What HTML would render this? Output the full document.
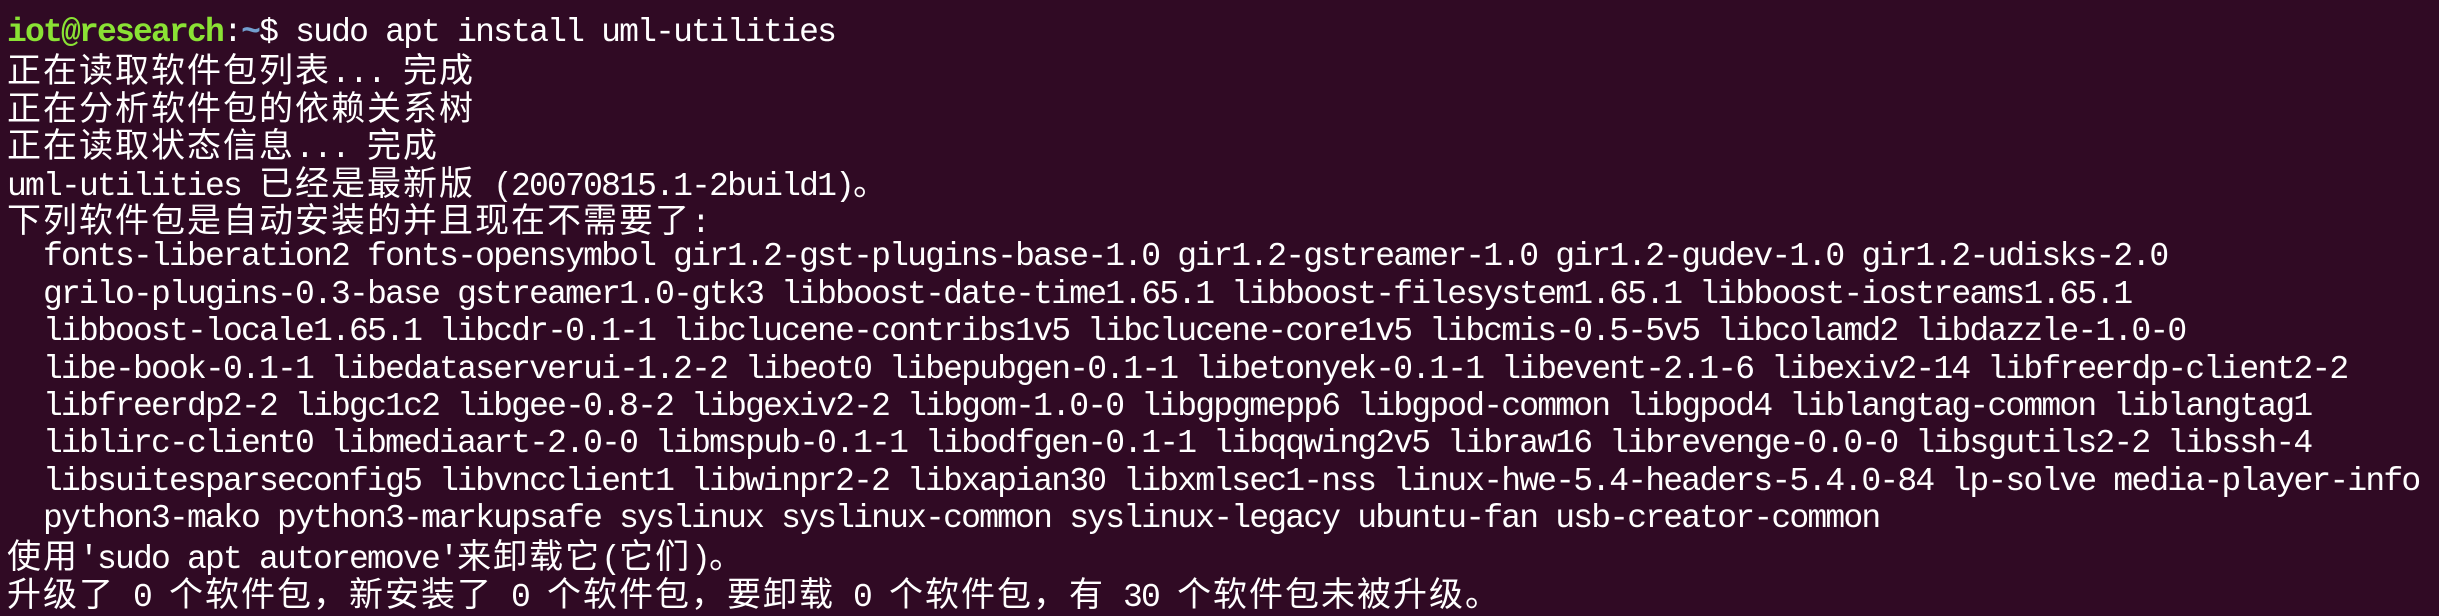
<!DOCTYPE html>
<html><head><meta charset="utf-8"><style>
html,body{margin:0;padding:0;background:#300a24;width:2439px;height:615px;overflow:hidden}
.t{position:absolute;left:7px;top:14px;font-family:"Liberation Mono","Noto Sans CJK SC",monospace;font-size:33px;letter-spacing:-1.8px;line-height:37.4px;color:#ffffff;white-space:pre}
.t div{height:37.4px;line-height:37.4px;overflow:visible}
.c{font-family:"Noto Sans CJK SC","WenQuanYi Zen Hei",sans-serif;font-size:34px;letter-spacing:2px;line-height:1;vertical-align:baseline}
.g{color:#8ae234;font-weight:bold}
.b{color:#729fcf;font-weight:bold}
</style></head><body><div class="t"><div><span class="g">iot@research</span>:<span class="b">~</span>$ sudo apt install uml-utilities</div><div><span class="c">正在读取软件包列表</span>... <span class="c">完成</span></div><div><span class="c">正在分析软件包的依赖关系树</span></div><div><span class="c">正在读取状态信息</span>... <span class="c">完成</span></div><div>uml-utilities <span class="c">已经是最新版</span> (20070815.1-2build1)<span class="c">。</span></div><div><span class="c">下列软件包是自动安装的并且现在不需要了</span>:</div><div>  fonts-liberation2 fonts-opensymbol gir1.2-gst-plugins-base-1.0 gir1.2-gstreamer-1.0 gir1.2-gudev-1.0 gir1.2-udisks-2.0</div><div>  grilo-plugins-0.3-base gstreamer1.0-gtk3 libboost-date-time1.65.1 libboost-filesystem1.65.1 libboost-iostreams1.65.1</div><div>  libboost-locale1.65.1 libcdr-0.1-1 libclucene-contribs1v5 libclucene-core1v5 libcmis-0.5-5v5 libcolamd2 libdazzle-1.0-0</div><div>  libe-book-0.1-1 libedataserverui-1.2-2 libeot0 libepubgen-0.1-1 libetonyek-0.1-1 libevent-2.1-6 libexiv2-14 libfreerdp-client2-2</div><div>  libfreerdp2-2 libgc1c2 libgee-0.8-2 libgexiv2-2 libgom-1.0-0 libgpgmepp6 libgpod-common libgpod4 liblangtag-common liblangtag1</div><div>  liblirc-client0 libmediaart-2.0-0 libmspub-0.1-1 libodfgen-0.1-1 libqqwing2v5 libraw16 librevenge-0.0-0 libsgutils2-2 libssh-4</div><div>  libsuitesparseconfig5 libvncclient1 libwinpr2-2 libxapian30 libxmlsec1-nss linux-hwe-5.4-headers-5.4.0-84 lp-solve media-player-info</div><div>  python3-mako python3-markupsafe syslinux syslinux-common syslinux-legacy ubuntu-fan usb-creator-common</div><div><span class="c">使用</span>'sudo apt autoremove'<span class="c">来卸载它</span>(<span class="c">它们</span>)<span class="c">。</span></div><div><span class="c">升级了</span> 0 <span class="c">个软件包，新安装了</span> 0 <span class="c">个软件包，要卸载</span> 0 <span class="c">个软件包，有</span> 30 <span class="c">个软件包未被升级。</span></div></div></body></html>
